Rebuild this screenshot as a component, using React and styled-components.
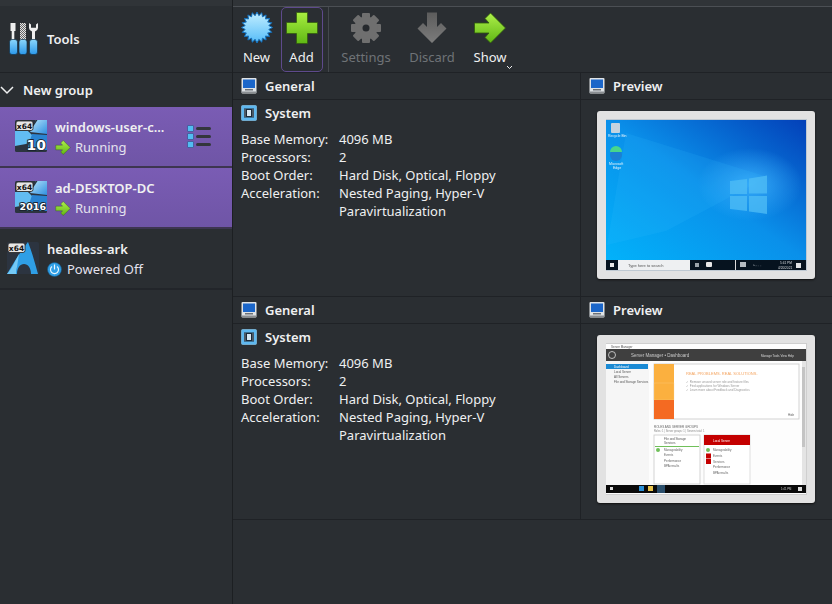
import React from "react";
import styled, { createGlobalStyle } from "styled-components";

const GlobalStyle = createGlobalStyle`
  html, body { margin: 0; padding: 0; background: #2a2e32; }
  body { font-family: "Noto Sans", "DejaVu Sans", sans-serif; font-size: 13px; color: #eff0f1; }
`;

const Window = styled.div`
  width: 832px;
  height: 604px;
  display: flex;
  overflow: hidden;
  background: #2a2e32;
`;

const Sidebar = styled.aside`
  width: 233px;
  flex: none;
  box-sizing: border-box;
  border-right: 1px solid #1c1f22;
  display: flex;
  flex-direction: column;
`;

const ToolsRow = styled.div`
  height: 73px;
  box-sizing: border-box;
  display: flex;
  align-items: center;
  gap: 8px;
  padding: 6px 0 0 9px;
  font-weight: 600;
  border-bottom: 1px solid #1f2226;
  background: linear-gradient(#303438 0, #303438 6px, #2a2e32 6px);
`;

const GroupRow = styled.div`
  height: 34px;
  box-sizing: border-box;
  display: flex;
  align-items: center;
  gap: 9px;
  font-weight: 600;
`;

const VmRow = styled.div`
  height: 61px;
  box-sizing: border-box;
  display: flex;
  align-items: center;
  padding: 0 0 1px ${(p) => (p.$selected ? "15px" : "7px")};
  gap: 8px;
  background: ${(p) => (p.$selected ? "linear-gradient(#7a5cb4, #6f55a6)" : "transparent")};
  border-bottom: 2px solid ${(p) => (p.$selected ? "#3d3550" : "#22252a")};
`;

const VmText = styled.div`
  display: flex;
  flex-direction: column;
  flex: 1;
  gap: 2px;
  padding-top: 2px;
  min-width: 0;
`;

const VmName = styled.div`
  font-weight: 600;
  line-height: 18px;
  white-space: nowrap;
`;

const VmState = styled.div`
  display: flex;
  align-items: center;
  gap: ${(p) => p.$gap || 4}px;
  line-height: 18px;
  color: #e4e2ee;
`;

const Main = styled.main`
  flex: 1;
  display: flex;
  flex-direction: column;
  min-width: 0;
`;

const Toolbar = styled.div`
  height: 73px;
  box-sizing: border-box;
  padding-top: 6px;
  display: flex;
  align-items: flex-start;
  border-bottom: 1px solid #1f2226;
  background: linear-gradient(#303438 0, #303438 6px, #4b4f54 6px, #4b4f54 7px, #2a2e32 7px);
`;

const ToolButton = styled.div`
  width: ${(p) => p.$w}px;
  height: 65px;
  margin: 1px 0 0 ${(p) => (p.$focus ? "1px" : "0")};
  padding: 4px ${(p) => (p.$focus ? "1px" : "0")} 0 0;
  box-sizing: border-box;
  display: flex;
  flex-direction: column;
  align-items: center;
  gap: 4px;
  position: relative;
  line-height: 18px;
  color: ${(p) => (p.$off ? "#6f7377" : "#eff0f1")};
  border: 1px solid ${(p) => (p.$focus ? "#5e4a8c" : "transparent")};
  border-radius: 5px;
`;

const ToolbarDivider = styled.div`
  width: 1px;
  height: 65px;
  margin: 1px 0 0 5px;
  background: #44484d;
`;

const Caret = styled.svg`
  position: absolute;
  right: 5px;
  bottom: 1px;
`;

const Pane = styled.section`
  height: 224px;
  flex: none;
  display: flex;
  box-sizing: border-box;
  border-bottom: 1px solid #1f2226;
  &:last-child { height: 223px; }
`;

const Details = styled.div`
  width: 348px;
  flex: none;
  box-sizing: border-box;
  border-right: 1px solid #1f2226;
`;

const Preview = styled.div`
  flex: 1;
  display: flex;
  flex-direction: column;
`;

const SectionHead = styled.div`
  height: 27px;
  box-sizing: border-box;
  display: flex;
  align-items: center;
  gap: 8px;
  padding-left: 8px;
  font-weight: 600;
  border-bottom: 1px solid #1f2226;
`;

const SystemHead = styled(SectionHead)`
  height: 26px;
  border-bottom: none;
`;

const InfoGrid = styled.dl`
  margin: 4px 0 0 8px;
  display: grid;
  grid-template-columns: 98px 1fr;
  line-height: 18px;
`;

const Term = styled.dt`
  margin: 0;
`;

const Value = styled.dd`
  margin: 0;
`;

const ShotFrame = styled.div`
  margin: 11px 0 0 16px;
  width: 218px;
  height: 168px;
  box-sizing: border-box;
  background: #e2e2e2;
  border-radius: 3px;
  padding: 8px 8px 8px 9px;
  box-shadow: 0 1px 2px #111;
  overflow: hidden;
`;

const ShotSvg = styled.svg`
  display: block;
  filter: blur(0.35px);
`;

const DetailsGlyph = styled.svg`
  flex: none;
  margin-right: 21px;
`;

const TinyText = styled.text`
  font-family: "Liberation Sans", sans-serif;
`;

const Handle = ({ x }) => (
  <rect x={x} y="16.500" width="8" height="15" rx="2.500" fill="url(#toolHandle)" stroke="#123047" strokeWidth=".7" />
);

const ToolsIcon = () => (
  <svg width="30" height="32" viewBox="0 0 30 32">
    <defs>
      <linearGradient id="toolHandle" x1="0" y1="0" x2="0" y2="1">
        <stop offset="0" stopColor="#8bd6fb" />
        <stop offset="1" stopColor="#2b98ea" />
      </linearGradient>
      <pattern id="fileHatch" width="2" height="2" patternUnits="userSpaceOnUse">
        <rect width="2" height="2" fill="#e4e4e4" />
        <rect width="1" height="1" fill="#666" />
        <rect x="1" y="1" width="1" height="1" fill="#666" />
      </pattern>
    </defs>
    <path d="M1.500 0h5v8h-1.200v9H2.700V8H1.500z" fill="#eeeeee" />
    <rect x="11" y="0" width="6" height="17" fill="url(#fileHatch)" />
    <path d="M20 0v5a4 4 0 0 0 3 3.500V17h3V8.500a4 4 0 0 0 3-3.500V0l-2 1.500v3.200h-5V1.500z" fill="#eeeeee" />
    <Handle x={0.5} />
    <Handle x={10} />
    <Handle x={20.500} />
  </svg>
);

const Chevron = () => (
  <svg width="14" height="9" viewBox="0 0 14 9">
    <path d="M1 1l6 6 6-6" fill="none" stroke="#eff0f1" strokeWidth="1.500" />
  </svg>
);

const Badge = () => (
  <>
    <rect x="1" y="1" width="17" height="9.500" rx="2" fill="#e6e6e6" stroke="#222" strokeWidth=".8" />
    <text x="9.500" y="8.500" textAnchor="middle" fontFamily="DejaVu Sans" fontWeight="700" fontSize="7.500" fill="#111">x64</text>
  </>
);

const OsIcon = ({ id, label, small }) => (
  <svg width="32" height="32" viewBox="0 0 32 32" style={{ flex: "none" }}>
    <defs>
      <linearGradient id={id} x1="0" y1="0" x2="1" y2="1">
        <stop offset="0" stopColor="#b7e4fa" />
        <stop offset="1" stopColor="#2f8fe0" />
      </linearGradient>
    </defs>
    <rect width="32" height="32" rx="1.500" fill="#2c3440" />
    <path d="M21 0h11v14l-17-2z" fill={`url(#${id})`} />
    <path d="M0 11h13l7 7-9 6-11 2z" fill="#62bcf2" />
    <path d="M17 14l15 1v15H12z" fill="#2a84d2" />
    <path d="M13 11L21 0h1.500L15 11.500z" fill="#27303b" />
    <Badge />
    <text x="31" y={small ? 29 : 30} textAnchor="end" fontFamily="DejaVu Sans" fontWeight="700" fontSize={small ? 9.500 : 14} fill="#fff" stroke="#1b2430" strokeWidth="1.800" paintOrder="stroke">
      {label}
    </text>
  </svg>
);

const ArchIcon = () => (
  <svg width="32" height="32" viewBox="0 0 32 32" style={{ flex: "none" }}>
    <rect width="32" height="32" rx="1.500" fill="#2c3440" />
    <path d="M0 32C6 22 13 10 21 0c4 10 7 21 10 32h-7c0-6-3-10-7-10s-7 4-7 10z" fill="#2f9fe6" />
    <path d="M0 32c5-5 8-13 12-20l-2 13c-1 2-1 5-1 7z" fill="#74c9f6" />
    <Badge />
  </svg>
);

const PowerIcon = () => (
  <svg width="15" height="15" viewBox="0 0 15 15">
    <circle cx="7.500" cy="7.500" r="7" fill="#2f9fe6" stroke="#16527e" strokeWidth=".6" />
    <path d="M5 4.500a4 4 0 1 0 5 0" fill="none" stroke="#e8f6ff" strokeWidth="1.200" />
    <path d="M7.500 2.500v5" stroke="#e8f6ff" strokeWidth="1.200" />
  </svg>
);

const Bullet = ({ y }) => (
  <rect x=".5" y={y} width="6" height="6" rx=".5" fill="#52bdf2" stroke="#3c4f8c" strokeWidth=".7" />
);

const DetailsIcon = () => (
  <DetailsGlyph width="24" height="23" viewBox="0 0 24 23">
    <Bullet y={.5} />
    <Bullet y={8.500} />
    <Bullet y={16.500} />
    <rect x="9" y="2" width="15" height="3" rx="1.500" fill="#33363c" />
    <rect x="9" y="10" width="15" height="3" rx="1.500" fill="#33363c" />
    <rect x="9" y="18" width="15" height="3" rx="1.500" fill="#33363c" />
  </DetailsGlyph>
);

const NewIcon = () => {
  const pts = [];
  for (let i = 0; i < 40; i++) {
    const r = i % 2 ? 12 : 15.500;
    const a = (i / 40) * Math.PI * 2;
    pts.push(`${16 + r * Math.cos(a)},${15.500 + r * Math.sin(a)}`);
  }
  return (
    <svg width="32" height="32" viewBox="0 0 32 32">
      <defs>
        <linearGradient id="newFill" x1="0" y1="0" x2="0" y2="1">
          <stop offset="0" stopColor="#c4efff" />
          <stop offset="1" stopColor="#55bcf8" />
        </linearGradient>
      </defs>
      <polygon points={pts.join(" ")} fill="url(#newFill)" stroke="#1070c0" strokeWidth="1" />
    </svg>
  );
};

const AddIcon = () => (
  <svg width="32" height="32" viewBox="0 0 32 32">
    <defs>
      <linearGradient id="addFill" x1="0" y1="0" x2="0" y2="1">
        <stop offset="0" stopColor="#a8ee40" />
        <stop offset="1" stopColor="#5fb814" />
      </linearGradient>
    </defs>
    <path d="M10.500 .5h11v10h10v11h-10v10h-11v-10H.5v-11h10z" fill="url(#addFill)" stroke="#2f5a0a" strokeWidth=".7" />
  </svg>
);

const SettingsIcon = () => {
  const teeth = [0, 45, 90, 135];
  return (
    <svg width="32" height="32" viewBox="0 0 32 32">
      {teeth.map((t) => (
        <rect key={t} x="12" y="1" width="8" height="30" rx="1" fill="#6f6f6f" transform={`rotate(${t} 16 16)`} />
      ))}
      <circle cx="16" cy="16" r="11.500" fill="#6f6f6f" />
      <circle cx="16" cy="16" r="3.500" fill="#26292d" />
    </svg>
  );
};

const DiscardIcon = () => (
  <svg width="32" height="32" viewBox="0 0 32 32">
    <defs>
      <linearGradient id="discardFill" x1="0" y1="0" x2="0" y2="1">
        <stop offset="0" stopColor="#5c5c5c" />
        <stop offset="1" stopColor="#7c7c7c" />
      </linearGradient>
    </defs>
    <path d="M11 .5h10V15l4-4 5.500 5.500L16 31 1.500 16.500 7 11l4 4z" fill="url(#discardFill)" />
  </svg>
);

const GreenArrow = ({ width = 32, height = 32 }) => (
  <svg width={width} height={height} viewBox="0 0 32 32" style={{ flex: "none" }}>
    <path d="M.5 11H15l-4-4.500L16.500 1 31.500 16 16.500 31 11 25.500 15 21H.5z" fill="url(#arrowFill)" stroke="#2f5a0a" strokeWidth=".8" />
  </svg>
);

const ArrowDefs = () => (
  <svg width="0" height="0" style={{ position: "absolute" }}>
    <defs>
      <linearGradient id="arrowFill" x1="0" y1="0" x2="0" y2="1">
        <stop offset="0" stopColor="#aef04a" />
        <stop offset="1" stopColor="#5fb514" />
      </linearGradient>
    </defs>
  </svg>
);

const GeneralIcon = () => (
  <svg width="16" height="16" viewBox="0 0 16 16">
    <rect x=".5" y="0" width="15" height="15.500" rx="1" fill="#dfe3e6" />
    <rect x="2" y="1.500" width="12" height="8.500" fill="#1b66c9" />
    <rect x="4" y="11" width="8" height="1.500" fill="#6d7176" />
    <rect x="1" y="13.500" width="14" height="1.500" fill="#8a8e92" />
  </svg>
);

const SystemIcon = () => (
  <svg width="16" height="16" viewBox="0 0 16 16">
    <rect x=".5" y=".5" width="15" height="15" rx="1" fill="#5fb8f0" stroke="#8fd0f6" strokeWidth=".6" />
    <rect x="3" y="3.500" width="10" height="9" fill="#1c2a38" />
    <rect x="6" y="5" width="4" height="6" fill="#d7e8f4" />
    <path d="M4 4.500v7M12 4.500v7" stroke="#d7e8f4" strokeWidth="1" strokeDasharray="1 1" />
  </svg>
);

const Win10Shot = () => (
  <ShotSvg width="201" height="152" viewBox="0 0 201 152">
    <defs>
      <linearGradient id="deskBg" x1="0" y1="1" x2="1" y2="0">
        <stop offset="0" stopColor="#02b2fa" />
        <stop offset=".5" stopColor="#0a90ea" />
        <stop offset="1" stopColor="#0340b8" />
      </linearGradient>
      <radialGradient id="deskGlow" cx="72%" cy="46%" r="26%">
        <stop offset="0" stopColor="#3fb4ff" stopOpacity=".8" />
        <stop offset="1" stopColor="#3fb4ff" stopOpacity="0" />
      </radialGradient>
    </defs>
    <rect width="201" height="152" fill="#bfc9d2" />
    <rect x="0" y="1" width="200" height="140" fill="url(#deskBg)" />
    <rect x="0" y="1" width="200" height="140" fill="url(#deskGlow)" />
    <path d="M20 14L162 58 60 112 1 126z" fill="#37c0ff" opacity=".14" />
    <path d="M124 62l17-2v15h-17zM143 59.500l18-3v18h-18zM124 77h17v15l-17-2zM143 77h18v18l-18-2.500z" fill="#50bdf5" opacity=".75" />
    <rect x="5" y="4" width="9" height="10" rx="1" fill="#c4d3df" />
    <TinyText x="2" y="18" fontSize="3.500" fill="#e8f4fb">Recycle Bin</TinyText>
    <circle cx="10" cy="36" r="6" fill="#1c7fd2" />
    <path d="M4 33a6 6 0 0 1 12 0z" fill="#48d68c" />
    <TinyText x="3" y="46" fontSize="3.500" fill="#e8f4fb">Microsoft</TinyText>
    <TinyText x="7" y="50" fontSize="3.500" fill="#e8f4fb">Edge</TinyText>
    <rect x="0" y="141" width="200" height="10" fill="#06131f" />
    <rect x="4" y="144" width="4" height="4" fill="#e8e8e8" />
    <rect x="12" y="141" width="72" height="10" fill="#eef0f2" />
    <TinyText x="22" y="147.500" fontSize="4" fill="#555">Type here to search</TinyText>
    <rect x="89" y="144" width="4" height="4" fill="#9aa3aa" />
    <rect x="100" y="143" width="6" height="5" rx="1" fill="#e8e8e8" />
    <rect x="129" y="141" width="1" height="10" fill="#dcdcdc" />
    <rect x="134" y="143" width="6" height="5" fill="#b5bcc2" />
    <TinyText x="147" y="148" fontSize="3.500" fill="#c8ced3">^ ◦ ▫ ▫</TinyText>
    <TinyText x="174" y="145" fontSize="3.200" fill="#d7dbde">5:41 PM</TinyText>
    <TinyText x="172" y="149.500" fontSize="3.200" fill="#d7dbde">4/20/2021</TinyText>
    <rect x="190" y="144" width="5" height="5" fill="#dfe3e6" />
  </ShotSvg>
);

const ServerShot = () => (
  <ShotSvg width="201" height="152" viewBox="0 0 201 152">
    <rect width="201" height="152" fill="#cfcfcf" />
    <rect x="0" y="1" width="200" height="150" fill="#fdfdfd" />
    <TinyText x="5" y="4.500" fontSize="3" fill="#555">Server Manager</TinyText>
    <rect x="0" y="6" width="200" height="12" fill="#3f3f3f" />
    <circle cx="6" cy="12" r="3.500" fill="none" stroke="#ddd" strokeWidth=".8" />
    <TinyText x="25" y="14" fontSize="4.500" fill="#c9c9c9">Server Manager • Dashboard</TinyText>
    <TinyText x="155" y="13.500" fontSize="3" fill="#d8d8d8">Manage  Tools  View  Help</TinyText>
    <rect x="0" y="18" width="43" height="124" fill="#f6f6f6" />
    <rect x="0" y="21" width="42" height="5" fill="#1a8ad4" />
    <TinyText x="8" y="25" fontSize="3" fill="#fff">Dashboard</TinyText>
    <TinyText x="8" y="30" fontSize="3" fill="#555">Local Server</TinyText>
    <TinyText x="8" y="35" fontSize="3" fill="#555">All Servers</TinyText>
    <TinyText x="8" y="40" fontSize="3" fill="#555">File and Storage Services</TinyText>
    <rect x="48" y="21" width="145" height="55" fill="#fff" stroke="#c9c9c9" strokeWidth=".8" />
    <rect x="48" y="21" width="20" height="19" fill="#fbb03f" />
    <rect x="48" y="40" width="20" height="17" fill="#fbb03f" stroke="#fdd391" strokeWidth=".3" />
    <rect x="48" y="57" width="20" height="19" fill="#f46a22" />
    <TinyText x="80" y="32" fontSize="4" fill="#f4a460">REAL PROBLEMS. REAL SOLUTIONS.</TinyText>
    <TinyText x="80" y="40" fontSize="3" fill="#999">✓ Remove unused server role and feature files</TinyText>
    <TinyText x="80" y="44" fontSize="3" fill="#999">✓ Find applications for Windows Server</TinyText>
    <TinyText x="80" y="48" fontSize="3" fill="#999">✓ Learn more about Feedback and Diagnostics</TinyText>
    <TinyText x="182" y="73" fontSize="3" fill="#666">Hide</TinyText>
    <TinyText x="48" y="85" fontSize="3" fill="#666">ROLES AND SERVER GROUPS</TinyText>
    <TinyText x="48" y="89" fontSize="2.600" fill="#888">Roles: 1  |  Server groups: 1  |  Servers total: 1</TinyText>
    <rect x="48" y="92" width="46" height="49" fill="#fff" stroke="#c9c9c9" strokeWidth=".8" />
    <rect x="49" y="103" width="44" height="1" fill="#70c05a" />
    <TinyText x="58" y="97" fontSize="3" fill="#555">File and Storage</TinyText>
    <TinyText x="58" y="101" fontSize="3" fill="#555">Services</TinyText>
    <circle cx="52" cy="107" r="2" fill="#70c05a" />
    <TinyText x="58" y="108" fontSize="3" fill="#666">Manageability</TinyText>
    <TinyText x="58" y="113" fontSize="3" fill="#666">Events</TinyText>
    <TinyText x="58" y="119" fontSize="3" fill="#666">Performance</TinyText>
    <TinyText x="58" y="124" fontSize="3" fill="#666">BPA results</TinyText>
    <rect x="98" y="92" width="46" height="49" fill="#fff" stroke="#d6d6d6" strokeWidth=".8" />
    <rect x="98" y="92" width="46" height="10" fill="#c40000" />
    <TinyText x="107" y="98.500" fontSize="3" fill="#fff">Local Server</TinyText>
    <circle cx="102" cy="107" r="2" fill="#70c05a" />
    <TinyText x="107" y="108" fontSize="3" fill="#666">Manageability</TinyText>
    <rect x="100" y="110.500" width="5" height="5" fill="#c40000" />
    <TinyText x="107" y="114" fontSize="3" fill="#666">Events</TinyText>
    <rect x="100" y="116" width="5" height="5" fill="#c40000" />
    <TinyText x="107" y="119.500" fontSize="3" fill="#666">Services</TinyText>
    <TinyText x="107" y="125" fontSize="3" fill="#666">Performance</TinyText>
    <TinyText x="107" y="131" fontSize="3" fill="#666">BPA results</TinyText>
    <rect x="196" y="18" width="4" height="124" fill="#e4e4e4" />
    <rect x="196" y="24" width="3" height="80" fill="#c4c4c4" />
    <rect x="0" y="142" width="200" height="8" fill="#0a0a0a" />
    <rect x="4" y="144" width="3" height="3" fill="#ddd" />
    <rect x="33" y="143" width="5" height="5" fill="#2a8fd6" />
    <rect x="42" y="143" width="5" height="5" fill="#e8c34a" />
    <rect x="51" y="142" width="8" height="8" fill="#2b4f6c" />
    <TinyText x="175" y="147" fontSize="2.800" fill="#ccc">1:41 PM</TinyText>
    <rect x="192" y="144" width="4" height="4" fill="#ddd" />
  </ShotSvg>
);

const panes = [<Win10Shot key="a" />, <ServerShot key="b" />];

const VmPane = ({ shot }) => (
  <Pane>
    <Details>
      <SectionHead>
        <GeneralIcon />
        General
      </SectionHead>
      <SystemHead>
        <SystemIcon />
        System
      </SystemHead>
      <InfoGrid>
        <Term>Base Memory:</Term>
        <Value>4096 MB</Value>
        <Term>Processors:</Term>
        <Value>2</Value>
        <Term>Boot Order:</Term>
        <Value>Hard Disk, Optical, Floppy</Value>
        <Term>Acceleration:</Term>
        <Value>
          Nested Paging, Hyper-V
          <br />
          Paravirtualization
        </Value>
      </InfoGrid>
    </Details>
    <Preview>
      <SectionHead>
        <GeneralIcon />
        Preview
      </SectionHead>
      <ShotFrame>{shot}</ShotFrame>
    </Preview>
  </Pane>
);

export default function App() {
  return (
    <Window>
      <GlobalStyle />
      <ArrowDefs />
      <Sidebar>
        <ToolsRow>
          <ToolsIcon />
          Tools
        </ToolsRow>
        <GroupRow>
          <Chevron />
          New group
        </GroupRow>
        <VmRow $selected>
          <OsIcon id="osTen" label="10" />
          <VmText>
            <VmName>windows-user-c...</VmName>
            <VmState>
              <GreenArrow width={16} height={15} />
              Running
            </VmState>
          </VmText>
          <DetailsIcon />
        </VmRow>
        <VmRow $selected>
          <OsIcon id="osSrv" label="2016" small />
          <VmText>
            <VmName>ad-DESKTOP-DC</VmName>
            <VmState>
              <GreenArrow width={16} height={15} />
              Running
            </VmState>
          </VmText>
        </VmRow>
        <VmRow>
          <ArchIcon />
          <VmText>
            <VmName>headless-ark</VmName>
            <VmState $gap={5}>
              <PowerIcon />
              Powered Off
            </VmState>
          </VmText>
        </VmRow>
      </Sidebar>
      <Main>
        <Toolbar>
          <ToolButton $w={47}>
            <NewIcon />
            New
          </ToolButton>
          <ToolButton $w={42} $focus>
            <AddIcon />
            Add
          </ToolButton>
          <ToolbarDivider />
          <ToolButton $w={74} $off>
            <SettingsIcon />
            Settings
          </ToolButton>
          <ToolButton $w={58} $off>
            <DiscardIcon />
            Discard
          </ToolButton>
          <ToolButton $w={58}>
            <GreenArrow />
            Show
            <Caret width="7" height="5" viewBox="0 0 7 5">
              <path d="M1 1l2.500 2.500L6 1" fill="none" stroke="#eff0f1" strokeWidth="1" />
            </Caret>
          </ToolButton>
        </Toolbar>
        {panes.map((shot) => (
          <VmPane key={shot.key} shot={shot} />
        ))}
      </Main>
    </Window>
  );
}
